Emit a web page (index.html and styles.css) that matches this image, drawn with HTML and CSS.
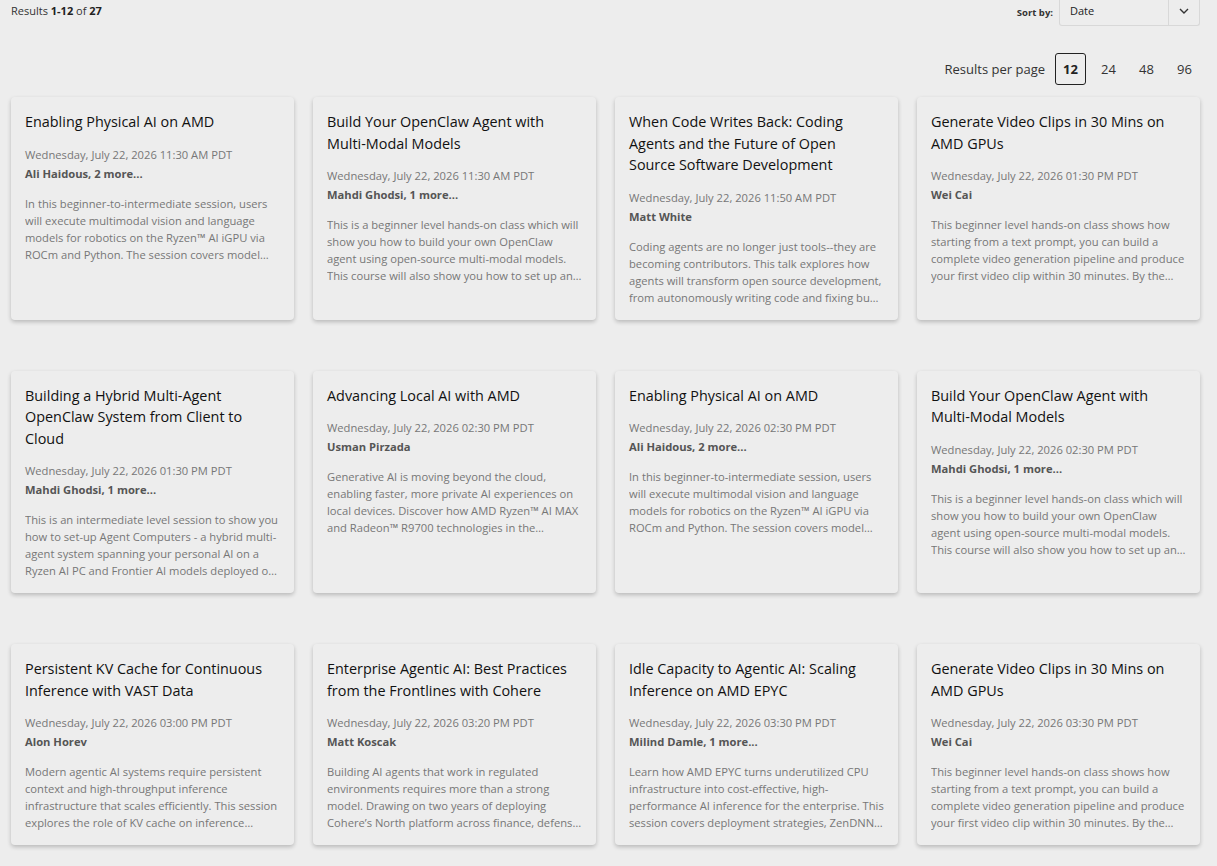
FILE: index.html
```html
<!DOCTYPE html>
<html lang="en">
<head>
<meta charset="utf-8">
<title>Sessions</title>
<link rel="stylesheet" href="styles.css">
</head>
<body>
<div class="page">
  <div class="topbar">
    <div class="results-count">Results <b>1-12</b> of <b>27</b></div>
    <div class="sort">
      <span class="sort-label">Sort by:</span>
      <div class="select">
        <span class="select-value">Date</span>
        <span class="select-toggle">
          <svg width="10" height="6" viewBox="0 0 10 6"><path d="M1 1l4 4 4-4" fill="none" stroke="#333" stroke-width="1.4"/></svg>
        </span>
      </div>
    </div>
  </div>

  <div class="per-page">
    <span class="per-page-label">Results per page</span>
    <span class="pp-option active">12</span>
    <span class="pp-option">24</span>
    <span class="pp-option">48</span>
    <span class="pp-option">96</span>
  </div>

  <div class="grid">
    <div class="card">
      <h3 class="title">Enabling Physical AI on AMD</h3>
      <div class="date">Wednesday, July 22, 2026 11:30 AM PDT</div>
      <div class="speakers">Ali Haidous, 2 more...</div>
      <p class="desc">In this beginner-to-intermediate session, users will execute multimodal vision and language models for robotics on the Ryzen™ AI iGPU via ROCm and Python. The session covers model deployment and optimization.</p>
    </div>
    <div class="card">
      <h3 class="title">Build Your OpenClaw Agent with Multi-Modal Models</h3>
      <div class="date">Wednesday, July 22, 2026 11:30 AM PDT</div>
      <div class="speakers">Mahdi Ghodsi, 1 more...</div>
      <p class="desc">This is a beginner level hands-on class which will show you how to build your own OpenClaw agent using open-source multi-modal models. This course will also show you how to set up and run it.</p>
    </div>
    <div class="card">
      <h3 class="title">When Code Writes Back: Coding Agents and the Future of Open Source Software Development</h3>
      <div class="date">Wednesday, July 22, 2026 11:50 AM PDT</div>
      <div class="speakers">Matt White</div>
      <p class="desc">Coding agents are no longer just tools--they are becoming contributors. This talk explores how agents will transform open source development, from autonomously writing code and fixing bugs to reviewing.</p>
    </div>
    <div class="card">
      <h3 class="title">Generate Video Clips in 30 Mins on AMD GPUs</h3>
      <div class="date">Wednesday, July 22, 2026 01:30 PM PDT</div>
      <div class="speakers">Wei Cai</div>
      <p class="desc">This beginner level hands-on class shows how starting from a text prompt, you can build a complete video generation pipeline and produce your first video clip within 30 minutes. By the end of it.</p>
    </div>

    <div class="card">
      <h3 class="title">Building a Hybrid Multi-Agent OpenClaw System from Client to Cloud</h3>
      <div class="date">Wednesday, July 22, 2026 01:30 PM PDT</div>
      <div class="speakers">Mahdi Ghodsi, 1 more...</div>
      <p class="desc">This is an intermediate level session to show you how to set-up Agent Computers - a hybrid multi-agent system spanning your personal AI on a Ryzen AI PC and Frontier AI models deployed on the cloud.</p>
    </div>
    <div class="card">
      <h3 class="title">Advancing Local AI with AMD</h3>
      <div class="date">Wednesday, July 22, 2026 02:30 PM PDT</div>
      <div class="speakers">Usman Pirzada</div>
      <p class="desc">Generative AI is moving beyond the cloud, enabling faster, more private AI experiences on local devices. Discover how AMD Ryzen™ AI MAX and Radeon™ R9700 technologies in the workstation.</p>
    </div>
    <div class="card">
      <h3 class="title">Enabling Physical AI on AMD</h3>
      <div class="date">Wednesday, July 22, 2026 02:30 PM PDT</div>
      <div class="speakers">Ali Haidous, 2 more...</div>
      <p class="desc">In this beginner-to-intermediate session, users will execute multimodal vision and language models for robotics on the Ryzen™ AI iGPU via ROCm and Python. The session covers model deployment and optimization.</p>
    </div>
    <div class="card">
      <h3 class="title">Build Your OpenClaw Agent with Multi-Modal Models</h3>
      <div class="date">Wednesday, July 22, 2026 02:30 PM PDT</div>
      <div class="speakers">Mahdi Ghodsi, 1 more...</div>
      <p class="desc">This is a beginner level hands-on class which will show you how to build your own OpenClaw agent using open-source multi-modal models. This course will also show you how to set up and run it.</p>
    </div>

    <div class="card">
      <h3 class="title">Persistent KV Cache for Continuous Inference with VAST Data</h3>
      <div class="date">Wednesday, July 22, 2026 03:00 PM PDT</div>
      <div class="speakers">Alon Horev</div>
      <p class="desc">Modern agentic AI systems require persistent context and high-throughput inference infrastructure that scales efficiently. This session explores the role of KV cache on inference performance.</p>
    </div>
    <div class="card">
      <h3 class="title">Enterprise Agentic AI: Best Practices from the Frontlines with Cohere</h3>
      <div class="date">Wednesday, July 22, 2026 03:20 PM PDT</div>
      <div class="speakers">Matt Koscak</div>
      <p class="desc">Building AI agents that work in regulated environments requires more than a strong model. Drawing on two years of deploying Cohere’s North platform across finance, defense and healthcare.</p>
    </div>
    <div class="card">
      <h3 class="title">Idle Capacity to Agentic AI: Scaling Inference on AMD EPYC</h3>
      <div class="date">Wednesday, July 22, 2026 03:30 PM PDT</div>
      <div class="speakers">Milind Damle, 1 more...</div>
      <p class="desc">Learn how AMD EPYC turns underutilized CPU infrastructure into cost-effective, high-performance AI inference for the enterprise. This session covers deployment strategies, ZenDNN and more.</p>
    </div>
    <div class="card">
      <h3 class="title">Generate Video Clips in 30 Mins on AMD GPUs</h3>
      <div class="date">Wednesday, July 22, 2026 03:30 PM PDT</div>
      <div class="speakers">Wei Cai</div>
      <p class="desc">This beginner level hands-on class shows how starting from a text prompt, you can build a complete video generation pipeline and produce your first video clip within 30 minutes. By the end of it.</p>
    </div>
  </div>
</div>
</body>
</html>
```

FILE: styles.css
```css
html, body {
  margin: 0;
  padding: 0;
  background: #ededed;
}

body {
  font-family: "Open Sans", "Liberation Sans", sans-serif;
  color: #222;
}

.page {
  padding: 0 17px 30px 11px;
}

/* top bar: result count + sort select */
.topbar {
  display: flex;
  justify-content: space-between;
  align-items: flex-start;
  height: 26px;
}

.results-count {
  font-size: 11px;
  line-height: 14px;
  padding-top: 4px;
  color: #333;
}

.results-count b {
  font-weight: 700;
  color: #222;
}

.sort {
  display: flex;
  align-items: center;
  height: 26px;
}

.sort-label {
  font-size: 9.5px;
  font-weight: 700;
  color: #333;
  margin-right: 6px;
  margin-top: -2px;
}

.select {
  display: flex;
  width: 141px;
  height: 26px;
  box-sizing: border-box;
  border: 1px solid #d8d8d8;
  border-top: none;
  border-radius: 0 0 3px 3px;
  background: #ededed;
}

.select-value {
  flex: 1;
  font-size: 11px;
  line-height: 22px;
  padding-left: 10px;
  color: #222;
}

.select-toggle {
  width: 31px;
  border-left: 1px solid #d8d8d8;
  display: flex;
  align-items: flex-start;
  justify-content: center;
  padding-top: 8px;
  box-sizing: border-box;
}

/* results-per-page switcher */
.per-page {
  display: flex;
  justify-content: flex-end;
  align-items: center;
  gap: 7px;
  margin-top: 27px;
  height: 32px;
}

.per-page-label {
  font-size: 13px;
  color: #333;
  margin-right: 3px;
}

.pp-option {
  width: 31px;
  height: 32px;
  box-sizing: border-box;
  display: flex;
  align-items: center;
  justify-content: center;
  font-size: 13px;
  color: #333;
}

.pp-option.active {
  border: 1px solid #222;
  border-radius: 3px;
  font-weight: 700;
  color: #222;
}

/* session cards */
.grid {
  margin-top: 12px;
  display: grid;
  grid-template-columns: repeat(4, 283px);
  column-gap: 19px;
  row-gap: 51px;
}

.card {
  background: #ededed;
  border-radius: 4px;
  box-shadow: 0 2px 4px rgba(0, 0, 0, 0.22);
  padding: 14px 14px 14px;
}

.title {
  margin: 0;
  font-size: 14.4px;
  font-weight: 400;
  line-height: 21.5px;
  color: #111;
}

.date {
  margin-top: 13px;
  font-size: 11.2px;
  line-height: 17px;
  color: #777;
}

.speakers {
  margin-top: 2px;
  font-size: 11.2px;
  line-height: 17px;
  font-weight: 700;
  color: #555;
}

.desc {
  margin: 13px 0 0;
  font-size: 11.2px;
  line-height: 17px;
  color: #777;
  display: -webkit-box;
  -webkit-line-clamp: 4;
  -webkit-box-orient: vertical;
  overflow: hidden;
}
```
